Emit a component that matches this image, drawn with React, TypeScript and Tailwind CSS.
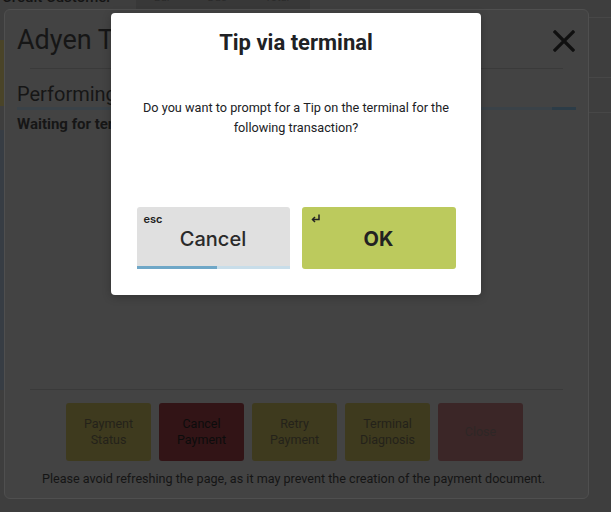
import React from "react";

const sans = { fontFamily: "Roboto, 'Liberation Sans', Arial, sans-serif" };
const geo = { fontFamily: "Inter, 'Noto Sans', sans-serif" };

function BgButton({ lines, className }: { lines: string[]; className: string }) {
  return (
    <div
      className={`w-[85px] h-[58px] rounded-[3px] flex flex-col items-center justify-center text-[12.5px] leading-[16px] ${className}`}
    >
      {lines.map((l) => (
        <span key={l}>{l}</span>
      ))}
    </div>
  );
}

export default function App() {
  return (
    <div className="relative w-[611px] h-[512px] overflow-hidden bg-[#3e3e3e]" style={sans}>
      {/* top strip of the page behind */}
      <div className="flex h-[9px] overflow-hidden items-end">
        <div className="w-[136px] text-[15px] leading-[12px] text-[#141414] font-medium whitespace-nowrap pl-[2px] translate-y-[-6px]">
          Credit Customer
        </div>
        <div className="w-[174px] h-full bg-[#383838] flex items-end gap-[38px] pl-[18px] text-[11px] leading-[10px] text-[#2a2a2a]">
          <span className="translate-y-[-6px]">Bal</span>
          <span className="translate-y-[-6px]">Due</span>
          <span className="translate-y-[-6px]">Total</span>
        </div>
      </div>

      <div className="flex">
        {/* left edge of the page behind */}
        <div className="w-[4px] flex flex-col">
          <div className="h-[31px]" />
          <div className="h-[66px] bg-[#4a4428]" />
          <div className="h-[24px]" />
          <div className="h-[260px] bg-[#373d44]" />
        </div>

        {/* Adyen modal (behind overlay) */}
        <div className="w-[585px] h-[490px] rounded-[6px] border border-[#4f4f4f] bg-[#434343] flex flex-col">
          <div className="flex items-start justify-between pl-[12px] pr-[13px] pt-[14px] h-[58px]">
            <span className="text-[27px] leading-[32px] text-[#161616]">Adyen Terminal</span>
            <svg width="22" height="22" viewBox="0 0 22 22" className="mt-[6px]">
              <path d="M2 2 L20 20 M20 2 L2 20" stroke="#101010" strokeWidth="3.2" strokeLinecap="square" />
            </svg>
          </div>
          <div className="mx-[25px] h-px bg-[#3a3a3a]" />
          <div className="px-[12px] pt-[13px]">
            <div className="text-[20px] leading-[24px] text-[#161616]">Performing Payment</div>
            <div className="flex h-[3px] mt-[1px]">
              <div className="flex-1 bg-[#3a4248]" />
              <div className="w-[24px] bg-[#2c3c47]" />
            </div>
            <div className="text-[15px] leading-[22px] font-bold text-[#161616] mt-[3px]">
              Waiting for terminal response...
            </div>
          </div>
          <div className="flex-1" />
          <div className="mx-[25px] h-px bg-[#3a3a3a]" />
          <div className="flex justify-center gap-[8px] mt-[13px] pr-[4px]">
            <BgButton lines={["Payment", "Status"]} className="bg-[#3e3a1e] text-[#24221a]" />
            <BgButton lines={["Cancel", "Payment"]} className="bg-[#321416] text-[#0c0c0c]" />
            <BgButton lines={["Retry", "Payment"]} className="bg-[#3e3a1e] text-[#24221a]" />
            <BgButton lines={["Terminal", "Diagnosis"]} className="bg-[#3e3a1e] text-[#24221a]" />
            <BgButton lines={["Close"]} className="bg-[#3b2627] text-[#2e2626]" />
          </div>
          <div className="text-center text-[12.6px] leading-[16px] text-[#151515] mt-[10px] mb-[11px] pr-[6px] whitespace-nowrap">
            Please avoid refreshing the page, as it may prevent the creation of the payment document.
          </div>
        </div>

        {/* right edge of the page behind */}
        <div className="flex-1 flex flex-col">
          <div className="h-[8px]" />
          <div className="h-px bg-[#474747]" />
          <div className="h-[59px]" />
          <div className="h-px bg-[#474747]" />
          <div className="h-[34px]" />
          <div className="h-px bg-[#474747]" />
        </div>
      </div>

      {/* Tip dialog */}
      <div className="absolute inset-0 flex justify-center pt-[13px] pr-[19px]">
        <div className="w-[370px] h-[282px] bg-white rounded-[4px] flex flex-col items-center shadow-[0_2px_8px_rgba(0,0,0,0.25)]">
          <div className="mt-[16px] text-[22px] leading-[28px] font-bold text-[#202124]">Tip via terminal</div>
          <div className="mt-[41px] text-[12.7px] leading-[20px] text-[#202124] text-center w-[330px]">
            Do you want to prompt for a Tip on the terminal for the following transaction?
          </div>
          <div className="flex-1" />
          <div className="flex gap-[12px] mb-[26px]" style={geo}>
            <button className="relative w-[153px] h-[62px] bg-[#e0e0e0] rounded-t-[3px] flex items-center justify-center">
              <span className="absolute left-[7px] top-[6px] text-[11px] leading-[13px] font-semibold text-[#222]">esc</span>
              <span className="text-[20px] font-medium text-[#2a2a2a] mt-[1px]">Cancel</span>
              <div className="absolute left-0 right-0 bottom-0 h-[3px] flex">
                <div className="w-[80px] bg-[#6fa7c7]" />
                <div className="flex-1 bg-[#c8dde9]" />
              </div>
            </button>
            <button className="relative w-[154px] h-[62px] bg-[#bcca5d] rounded-[3px] flex items-center justify-center">
              <svg className="absolute left-[8px] top-[6px]" width="12" height="11" viewBox="0 0 12 11">
                <path d="M9 1.5 V6.5 H3" fill="none" stroke="#222" strokeWidth="1.5" />
                <path d="M5 4 L2.5 6.5 L5 9" fill="none" stroke="#222" strokeWidth="1.5" />
              </svg>
              <span className="text-[20px] font-bold text-[#222] mt-[1px]">OK</span>
            </button>
          </div>
        </div>
      </div>
    </div>
  );
}
